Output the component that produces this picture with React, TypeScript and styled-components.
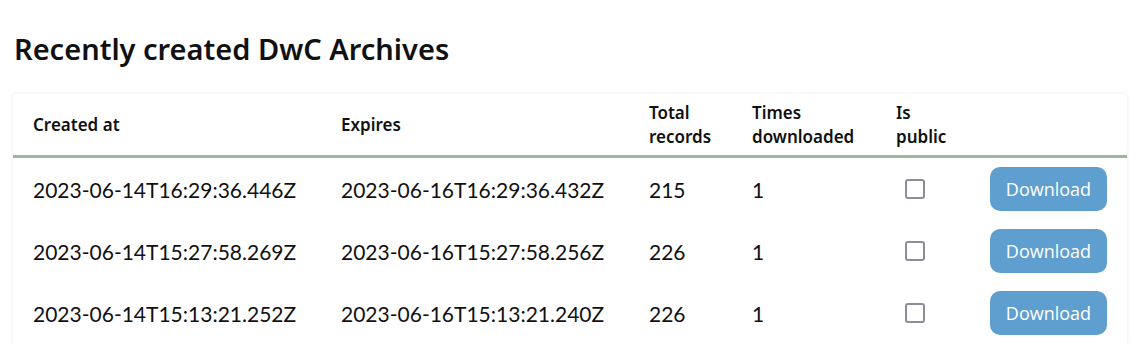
import React from 'react';
import styled, { createGlobalStyle } from 'styled-components';

const GlobalStyle = createGlobalStyle`
  body {
    margin: 0;
    background: #fff;
    font-family: "Noto Sans", sans-serif;
  }
`;

const Page = styled.div`
  padding: 26px 10px 0 13px;
`;

const Heading = styled.h2`
  margin: 0 0 22px 1px;
  font-family: "Noto Sans", sans-serif;
  font-size: 29px;
  font-weight: 600;
  color: #111;
  line-height: 46px;
`;

const Card = styled.div`
  background: #fff;
  box-shadow: 0 0 4px rgba(0, 0, 0, 0.08);
  border-radius: 2px;
`;

const Table = styled.table`
  width: 100%;
  border-collapse: collapse;
  table-layout: fixed;
`;

const HeadCell = styled.th<{ $w?: number }>`
  text-align: left;
  vertical-align: middle;
  padding: 7px 0 6px 20px;
  height: 48px;
  font-family: "Noto Sans", sans-serif;
  font-size: 17px;
  font-weight: 600;
  line-height: 24px;
  color: #111;
  border-bottom: 3px solid #9db89c;
  width: ${(p) => (p.$w ? `${p.$w}px` : 'auto')};
`;

const Cell = styled.td`
  padding: 0 0 0 20px;
  height: 62px;
  font-family: "Lato", sans-serif;
  font-size: 21px;
  color: #111;
  vertical-align: middle;
`;

const Box = styled.span`
  display: block;
  width: 16px;
  height: 16px;
  margin: -1px 0 0 9px;
  border: 2px solid #8f8b99;
  border-radius: 3px;
`;

const Button = styled.button`
  display: block;
  background: #5f9fcf;
  color: #fff;
  border: none;
  border-radius: 10px;
  width: 117px;
  height: 44px;
  font-family: "Open Sans", sans-serif;
  font-size: 18px;
  cursor: pointer;
`;

const rows = [
  { created: '2023-06-14T16:29:36.446Z', expires: '2023-06-16T16:29:36.432Z', total: 215, times: 1 },
  { created: '2023-06-14T15:27:58.269Z', expires: '2023-06-16T15:27:58.256Z', total: 226, times: 1 },
  { created: '2023-06-14T15:13:21.252Z', expires: '2023-06-16T15:13:21.240Z', total: 226, times: 1 },
];

const App: React.FC = () => {
  return (
    <Page>
      <GlobalStyle />
      <Heading>Recently created DwC Archives</Heading>
      <Card>
        <Table>
          <thead>
            <tr>
              <HeadCell $w={288}>Created at</HeadCell>
              <HeadCell $w={288}>Expires</HeadCell>
              <HeadCell $w={83}>Total<br />records</HeadCell>
              <HeadCell $w={124}>Times<br />downloaded</HeadCell>
              <HeadCell $w={74}>Is<br />public</HeadCell>
              <HeadCell></HeadCell>
            </tr>
          </thead>
          <tbody>
            {rows.map((r) => (
              <tr key={r.created}>
                <Cell>{r.created}</Cell>
                <Cell>{r.expires}</Cell>
                <Cell>{r.total}</Cell>
                <Cell>{r.times}</Cell>
                <Cell><Box /></Cell>
                <Cell><Button>Download</Button></Cell>
              </tr>
            ))}
          </tbody>
        </Table>
      </Card>
    </Page>
  );
};

export default App;
